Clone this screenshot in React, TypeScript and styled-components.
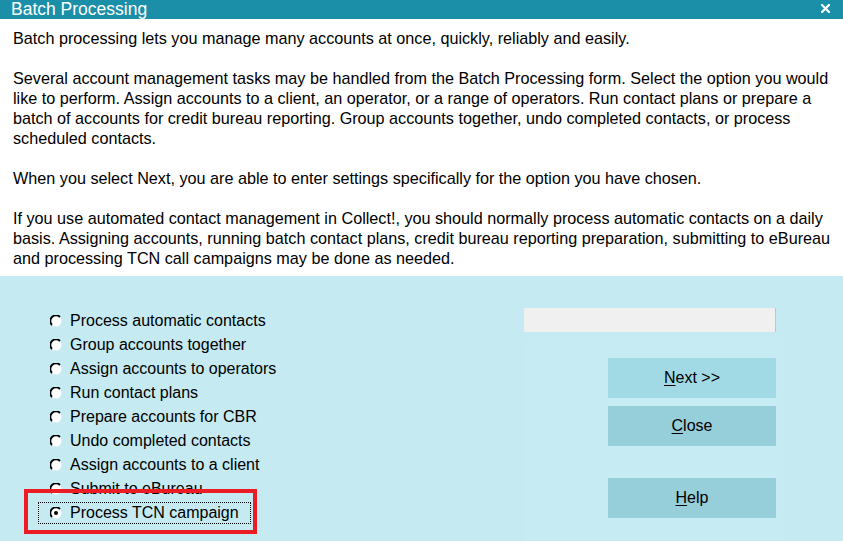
import React from 'react'
import styled, { createGlobalStyle } from 'styled-components'

const GlobalStyle = createGlobalStyle`
  html, body {
    margin: 0;
    padding: 0;
    background: #ffffff;
  }
  body {
    font-family: "Liberation Sans", Arial, sans-serif;
  }
`

const options = [
  'Process automatic contacts',
  'Group accounts together',
  'Assign accounts to operators',
  'Run contact plans',
  'Prepare accounts for CBR',
  'Undo completed contacts',
  'Assign accounts to a client',
  'Submit to eBureau',
  'Process TCN campaign',
]

const Radio = ({ checked }: { checked: boolean }) => (
  <svg width="12" height="12" viewBox="0 0 12 12">
    <circle cx="6" cy="6" r="5.5" fill="#ffffff" />
    <path d="M10 2 A5.5 5.5 0 0 0 2 10" fill="none" stroke="#000" strokeWidth="1.8" />
    {checked && <circle cx="6" cy="6" r="2" fill="#000" />}
  </svg>
)

export default function App() {
  const [selected, setSelected] = React.useState(8)

  return (
    <>
      <GlobalStyle />
      <Window>
        <TitleBar>
          <span>Batch Processing</span>
          <CloseIcon width="9" height="9" viewBox="0 0 9 9">
            <path d="M1 1 L8 8 M8 1 L1 8" stroke="#fff" strokeWidth="2.2" strokeLinecap="square" />
          </CloseIcon>
        </TitleBar>
        <Intro>
          <p>Batch processing lets you manage many accounts at once, quickly, reliably and easily.</p>
          <p>
            Several account management tasks may be handled from the Batch Processing form. Select the option you would
            <br />
            like to perform. Assign accounts to a client, an operator, or a range of operators. Run contact plans or prepare a
            <br />
            batch of accounts for credit bureau reporting. Group accounts together, undo completed contacts, or process
            <br />
            scheduled contacts.
          </p>
          <p>When you select Next, you are able to enter settings specifically for the option you have chosen.</p>
          <p>
            If you use automated contact management in Collect!, you should normally process automatic contacts on a daily
            <br />
            basis. Assigning accounts, running batch contact plans, credit bureau reporting preparation, submitting to eBureau
            <br />
            and processing TCN call campaigns may be done as needed.
          </p>
        </Intro>
        <Panel>
          <OptionList>
            {options.map((label, i) => (
              <Option key={label} $focused={i === selected} onClick={() => setSelected(i)}>
                <Radio checked={i === selected} />
                <span>{label}</span>
              </Option>
            ))}
          </OptionList>
          <RightColumn>
            <StatusBox />
            <ButtonGroup>
              <ActionButton $tone="light">
                <u>N</u>ext &gt;&gt;
              </ActionButton>
              <ActionButton>
                <u>C</u>lose
              </ActionButton>
              <ActionButton $gapBefore={32}>
                <u>H</u>elp
              </ActionButton>
            </ButtonGroup>
          </RightColumn>
          <Highlight />
        </Panel>
      </Window>
    </>
  )
}

const Window = styled.div`
  width: 843px;
  height: 541px;
  display: flex;
  flex-direction: column;
  overflow: hidden;
`

const TitleBar = styled.div`
  height: 19px;
  flex: none;
  background: #1b8fa8;
  color: #ffffff;
  font-size: 17.5px;
  line-height: 17px;
  padding: 0 13px 0 11px;
  display: flex;
  align-items: center;
  justify-content: space-between;
`

const CloseIcon = styled.svg`
  display: block;
  margin-top: -2px;
`

const Intro = styled.div`
  flex: none;
  background: #ffffff;
  color: #000000;
  font-size: 16.2px;
  line-height: 20px;
  padding: 9px 13px 8px;
  white-space: nowrap;

  p {
    margin: 0 0 20px;
  }
  p:last-child {
    margin-bottom: 0;
  }
`

const Panel = styled.div`
  flex: 1;
  position: relative;
  background: #c5eaf2;
  display: grid;
  grid-template-columns: 524px 1fr;
`

const OptionList = styled.div`
  display: flex;
  flex-direction: column;
  align-items: flex-start;
  gap: 2px;
  padding: 34px 0 0 38px;
`

const Option = styled.div<{ $focused?: boolean }>`
  height: 20px;
  display: inline-flex;
  align-items: center;
  gap: 8px;
  padding: 0 11px 0 11px;
  border: 1px dotted ${p => (p.$focused ? '#000' : 'transparent')};
  font-size: 16px;
  color: #000;
  cursor: default;

  svg {
    flex: none;
  }
`

const RightColumn = styled.div`
  display: flex;
  flex-direction: column;
  padding-top: 32px;
`

const StatusBox = styled.div`
  width: 251px;
  height: 24px;
  background: #f0f0f0;
  border-right: 1px solid #9fd3de;
`

const ButtonGroup = styled.div`
  flex: 1;
  width: 260px;
  margin: 6px 0 0 1px;
  background: #c7ebf3;
  display: flex;
  flex-direction: column;
  gap: 8px;
  padding: 20px 0 0 83px;
  box-sizing: border-box;
`

const ActionButton = styled.div<{ $tone?: 'light'; $gapBefore?: number }>`
  width: 168px;
  height: 40px;
  flex: none;
  margin-top: ${p => (p.$gapBefore ? p.$gapBefore - 8 : 0)}px;
  background: ${p => (p.$tone === 'light' ? '#a1dae4' : '#96ced9')};
  display: flex;
  align-items: center;
  justify-content: center;
  font-size: 16px;
  color: #000;

  u {
    text-decoration-thickness: 1px;
    text-underline-offset: 2px;
  }
`

const Highlight = styled.div`
  position: absolute;
  left: 24px;
  top: 213px;
  width: 233px;
  height: 45px;
  box-sizing: border-box;
  border: 4px solid #ec1c24;
  pointer-events: none;
`
